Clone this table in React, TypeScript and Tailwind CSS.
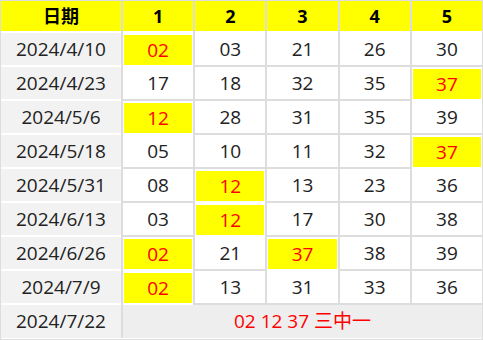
import React from 'react';

const rows: { date: string; nums: string[]; hit: number[] }[] = [
  { date: '2024/4/10', nums: ['02', '03', '21', '26', '30'], hit: [0] },
  { date: '2024/4/23', nums: ['17', '18', '32', '35', '37'], hit: [4] },
  { date: '2024/5/6', nums: ['12', '28', '31', '35', '39'], hit: [0] },
  { date: '2024/5/18', nums: ['05', '10', '11', '32', '37'], hit: [4] },
  { date: '2024/5/31', nums: ['08', '12', '13', '23', '36'], hit: [1] },
  { date: '2024/6/13', nums: ['03', '12', '17', '30', '38'], hit: [1] },
  { date: '2024/6/26', nums: ['02', '21', '37', '38', '39'], hit: [0, 2] },
  { date: '2024/7/9', nums: ['02', '13', '31', '33', '36'], hit: [0] },
];

const font = { fontFamily: '"Open Sans", "Noto Sans", "Noto Sans CJK SC", sans-serif' };

const App = () => {
  return (
    <div className="w-[483px] h-[340px] bg-white border border-[#dddddd] overflow-hidden text-[19px] text-[#222222]" style={font}>
      <div className="grid grid-cols-[120px_repeat(5,minmax(0,1fr))] gap-x-[2px] bg-[#dddddd]">
        {/* header */}
        {['日期', '1', '2', '3', '4', '5'].map(h => (
          <div key={h} className="h-[32px] border-b-2 border-white">
            <div className="h-[30px] bg-[#ffff00] flex items-center justify-center font-bold text-[18px] text-black">
              {h}
            </div>
          </div>
        ))}

        {rows.map(r => (
          <React.Fragment key={r.date}>
            <div className="h-[34px] bg-white">
              <div className="h-[32px] bg-[#f2f2f2] flex items-center justify-center">{r.date}</div>
            </div>
            {r.nums.map((n, i) => {
              const hit = r.hit.includes(i);
              return (
                <div key={i} className={hit ? 'h-[34px] bg-white pt-[2px] px-[1px] pb-[2px]' : 'h-[34px] bg-white border-b-2 border-[#dddddd]'}>
                  <div className={hit ? 'h-full bg-[#ffff00] text-[#ff0000] flex items-center justify-center' : 'h-full flex items-center justify-center'}>
                    {n}
                  </div>
                </div>
              );
            })}
          </React.Fragment>
        ))}

        {/* last row */}
        <div className="h-[33px] bg-[#f2f2f2] flex items-center justify-center">2024/7/22</div>
        <div className="col-span-5 h-[33px] bg-[#eeeeee] flex items-center justify-center text-[#ff0000]">
          02 12 37 三中一
        </div>
      </div>
    </div>
  );
};

export default App;
